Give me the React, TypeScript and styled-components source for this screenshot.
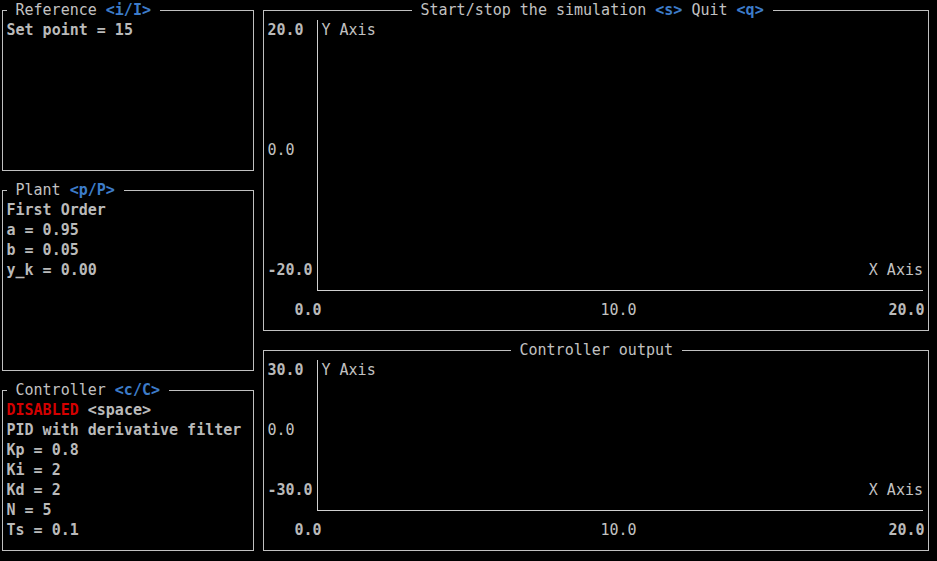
import React from "react";
import styled, { createGlobalStyle } from "styled-components";

const GlobalStyle = createGlobalStyle`
  html, body { margin: 0; padding: 0; background: #000; }
  body {
    font-family: "DejaVu Sans Mono", "Liberation Mono", monospace;
    font-size: 15px;
    line-height: 20px;
    color: #c2c2c2;
  }
`;

const Screen = styled.div`
  width: 937px;
  height: 561px;
  box-sizing: border-box;
  padding: 10px 0 0 2px;
  display: grid;
  grid-template-columns: 252px 666px;
  column-gap: 9px;
  align-items: start;
  background: #000;
`;

const Column = styled.div<{ $rows: string }>`
  display: grid;
  grid-template-rows: ${(p) => p.$rows};
  row-gap: 19px;
`;

const Panel = styled.section`
  position: relative;
  box-sizing: border-box;
  border: 1px solid #c0c0c0;
  padding: 9px 3.5px 10px 3.5px;
  display: flex;
  flex-direction: column;
  min-height: 0;
`;

const Title = styled.div<{ $left: number }>`
  position: absolute;
  top: -11px;
  left: ${(p) => p.$left}px;
  padding: 0 9px;
  background: #000;
  white-space: pre;
  line-height: 20px;
  color: #c2c2c2;
`;

const Key = styled.span`
  color: #3d7cc9;
  font-weight: bold;
`;

const Danger = styled.span`
  color: #d40000;
  font-weight: bold;
`;

const Line = styled.div`
  white-space: pre;
  font-weight: bold;
  color: #bababa;
  height: 20px;
`;

const ChartBody = styled.div`
  flex: 1;
  display: grid;
  grid-template-columns: 45px 9px 1fr;
  grid-template-rows: 1fr 20px 20px;
  min-height: 0;
`;

const YLabels = styled.div`
  grid-column: 1;
  grid-row: 1;
  display: flex;
  flex-direction: column;
  justify-content: space-between;
`;

const Label = styled.span<{ $bold?: boolean }>`
  white-space: pre;
  font-weight: ${(p) => (p.$bold ? "bold" : "normal")};
  color: ${(p) => (p.$bold ? "#bababa" : "#c2c2c2")};
  line-height: 20px;
`;

const AxisFrame = styled.div`
  grid-column: 2 / 4;
  grid-row: 1 / 3;
  margin: 0 1.5px 9px 4px;
  border-left: 1px solid #d0d0d0;
  border-bottom: 1px solid #d0d0d0;
  padding: 0 0 10px 4px;
  display: flex;
  flex-direction: column;
  justify-content: space-between;
`;

const AxisName = styled.span<{ $end?: boolean }>`
  align-self: ${(p) => (p.$end ? "flex-end" : "flex-start")};
  white-space: pre;
`;

const XLabels = styled.div`
  grid-column: 1 / 4;
  grid-row: 3;
  display: grid;
  grid-template-columns: 54px 279px 1fr auto;
`;

const Tick = styled.span<{ $col: number; $bold?: boolean; $end?: boolean }>`
  grid-column: ${(p) => p.$col};
  justify-self: ${(p) => (p.$end ? "end" : "start")};
  font-weight: ${(p) => (p.$bold ? "bold" : "normal")};
  color: ${(p) => (p.$bold ? "#bababa" : "#c2c2c2")};
  white-space: pre;
`;

type ChartProps = {
  yMax: string;
  yMid: string;
  yMin: string;
};

function Chart({ yMax, yMid, yMin }: ChartProps) {
  return (
    <ChartBody>
      <YLabels>
        <Label $bold>{yMax}</Label>
        <Label>{yMid}</Label>
        <Label $bold>{yMin}</Label>
      </YLabels>
      <AxisFrame>
        <AxisName>Y Axis</AxisName>
        <AxisName $end>X Axis</AxisName>
      </AxisFrame>
      <XLabels>
        <Tick $col={1} $bold $end>
          0.0
        </Tick>
        <Tick $col={3}>10.0</Tick>
        <Tick $col={4} $bold $end>
          20.0
        </Tick>
      </XLabels>
    </ChartBody>
  );
}

export default function App() {
  return (
    <>
      <GlobalStyle />
      <Screen>
        <Column $rows="161px 181px 161px">
          <Panel>
            <Title $left={3.5}>
              Reference <Key>{"<i/I>"}</Key>
            </Title>
            <Line>Set point = 15</Line>
          </Panel>
          <Panel>
            <Title $left={3.5}>
              Plant <Key>{"<p/P>"}</Key>
            </Title>
            <Line>First Order</Line>
            <Line>a = 0.95</Line>
            <Line>b = 0.05</Line>
            <Line>y_k = 0.00</Line>
          </Panel>
          <Panel>
            <Title $left={3.5}>
              Controller <Key>{"<c/C>"}</Key>
            </Title>
            <Line>
              <Danger>DISABLED</Danger> {"<space>"}
            </Line>
            <Line>PID with derivative filter</Line>
            <Line>Kp = 0.8</Line>
            <Line>Ki = 2</Line>
            <Line>Kd = 2</Line>
            <Line>N = 5</Line>
            <Line>Ts = 0.1</Line>
          </Panel>
        </Column>
        <Column $rows="321px 201px">
          <Panel>
            <Title $left={147.5}>
              Start/stop the simulation <Key>{"<s>"}</Key> Quit <Key>{"<q>"}</Key>
            </Title>
            <Chart yMax="20.0" yMid="0.0" yMin="-20.0" />
          </Panel>
          <Panel>
            <Title $left={246.5}>Controller output</Title>
            <Chart yMax="30.0" yMid="0.0" yMin="-30.0" />
          </Panel>
        </Column>
      </Screen>
    </>
  );
}
